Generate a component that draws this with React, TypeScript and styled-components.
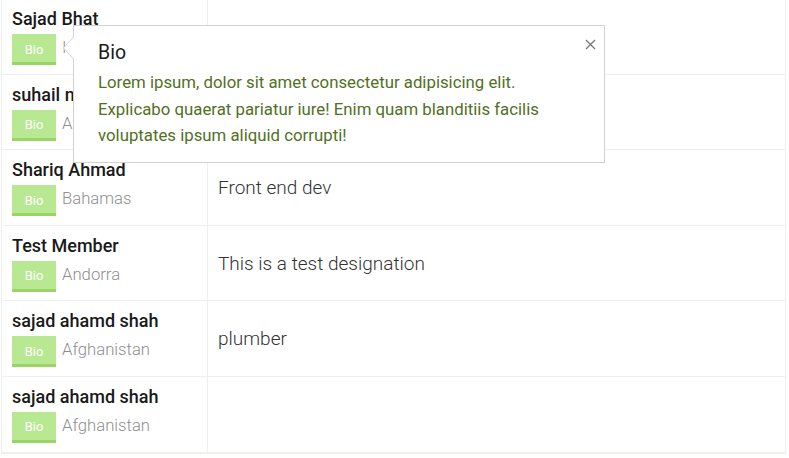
import React from "react";
import styled, { createGlobalStyle } from "styled-components";

const Global = createGlobalStyle`
  html, body { margin: 0; padding: 0; background: #fff; }
  body { font-family: Roboto, "Noto Sans", "Liberation Sans", sans-serif; overflow: hidden; }
  * { box-sizing: border-box; }
`;

const Page = styled.div`
  margin-top: -2px;
  padding: 0 3px 0 1px;
`;

const Table = styled.div`
  display: grid;
  grid-template-columns: 206px 1fr;
  border-left: 1px solid #efefef;
  border-right: 1px solid #efefef;
  border-bottom: 2px solid #edf2ea;
`;

const Row = styled.div`
  display: contents;
`;

const Cell = styled.div<{ $first?: boolean }>`
  height: 75.6px;
  border-top: 1px solid #efefef;
  padding: 0 10px;
  ${(p) => (p.$first ? "border-right: 1px solid #efefef;" : "")}
`;

const MemberCell = styled(Cell)`
  padding-top: 8px;
  display: flex;
  flex-direction: column;
  align-items: flex-start;
`;

const DesignationCell = styled(Cell)`
  display: flex;
  align-items: center;
  font-size: 19px;
  font-weight: 300;
  color: #333;
`;

const Name = styled.div`
  font-size: 18px;
  font-weight: 500;
  line-height: 24px;
  color: #1a1a1a;
  white-space: nowrap;
`;

const Meta = styled.div`
  margin-top: 3px;
  display: flex;
  align-items: center;
  gap: 6px;
`;

const BioAnchor = styled.div`
  position: relative;
`;

const BioButton = styled.button`
  width: 44px;
  height: 31px;
  border: none;
  border-bottom: 3px solid #9ad466;
  background: #b8e891;
  color: #fff;
  font-family: inherit;
  font-size: 13px;
  padding: 2px 0 0;
  cursor: pointer;
  display: block;
`;

const Country = styled.span`
  font-size: 16.7px;
  font-weight: 300;
  color: #8e8e8e;
  padding-bottom: 4px;
`;

const Popover = styled.div`
  position: absolute;
  left: calc(100% + 17px);
  top: -9px;
  width: 532px;
  background: #fff;
  border: 1px solid #d2d2d2;
  padding: 15px 24px 13px;
  z-index: 10;
  &::before,
  &::after {
    content: "";
    position: absolute;
    top: 11px;
    border-top: 11px solid transparent;
    border-bottom: 11px solid transparent;
  }
  &::before {
    left: -11px;
    border-right: 10px solid #d2d2d2;
  }
  &::after {
    left: -10px;
    border-right: 10px solid #fff;
  }
`;

const PopTitle = styled.div`
  font-size: 19.5px;
  line-height: 24px;
  color: #1a1a1a;
  margin-bottom: 4px;
`;

const PopBody = styled.div`
  font-size: 16.8px;
  line-height: 26.7px;
  color: #52701f;
`;

const Close = styled.button`
  position: absolute;
  top: 12px;
  right: 8px;
  width: 12px;
  height: 12px;
  padding: 0;
  border: none;
  background: none;
  cursor: pointer;
  display: flex;
  align-items: center;
  justify-content: center;
`;

type Member = { name: string; country: string; designation: string; open?: boolean };

const members: Member[] = [
  { name: "Sajad Bhat", country: "India", designation: "", open: true },
  { name: "suhail mir", country: "Afghanistan", designation: "" },
  { name: "Shariq Ahmad", country: "Bahamas", designation: "Front end dev" },
  { name: "Test Member", country: "Andorra", designation: "This is a test designation" },
  { name: "sajad ahamd shah", country: "Afghanistan", designation: "plumber" },
  { name: "sajad ahamd shah", country: "Afghanistan", designation: "" },
];

export default function App() {
  return (
    <Page>
      <Global />
      <Table>
        {members.map((m, i) => (
          <Row key={i}>
            <MemberCell $first>
              <Name>{m.name}</Name>
              <Meta>
                <BioAnchor>
                  <BioButton>Bio</BioButton>
                  {m.open && (
                    <Popover>
                      <Close aria-label="Close">
                        <svg width="11" height="11" viewBox="0 0 11 11">
                          <path d="M1 1L10 10M10 1L1 10" stroke="#7a7a7a" strokeWidth="1.4" />
                        </svg>
                      </Close>
                      <PopTitle>Bio</PopTitle>
                      <PopBody>
                        Lorem ipsum, dolor sit amet consectetur adipisicing elit. Explicabo quaerat
                        pariatur iure! Enim quam blanditiis facilis voluptates ipsum aliquid corrupti!
                      </PopBody>
                    </Popover>
                  )}
                </BioAnchor>
                <Country>{m.country}</Country>
              </Meta>
            </MemberCell>
            <DesignationCell>{m.designation}</DesignationCell>
          </Row>
        ))}
      </Table>
    </Page>
  );
}
